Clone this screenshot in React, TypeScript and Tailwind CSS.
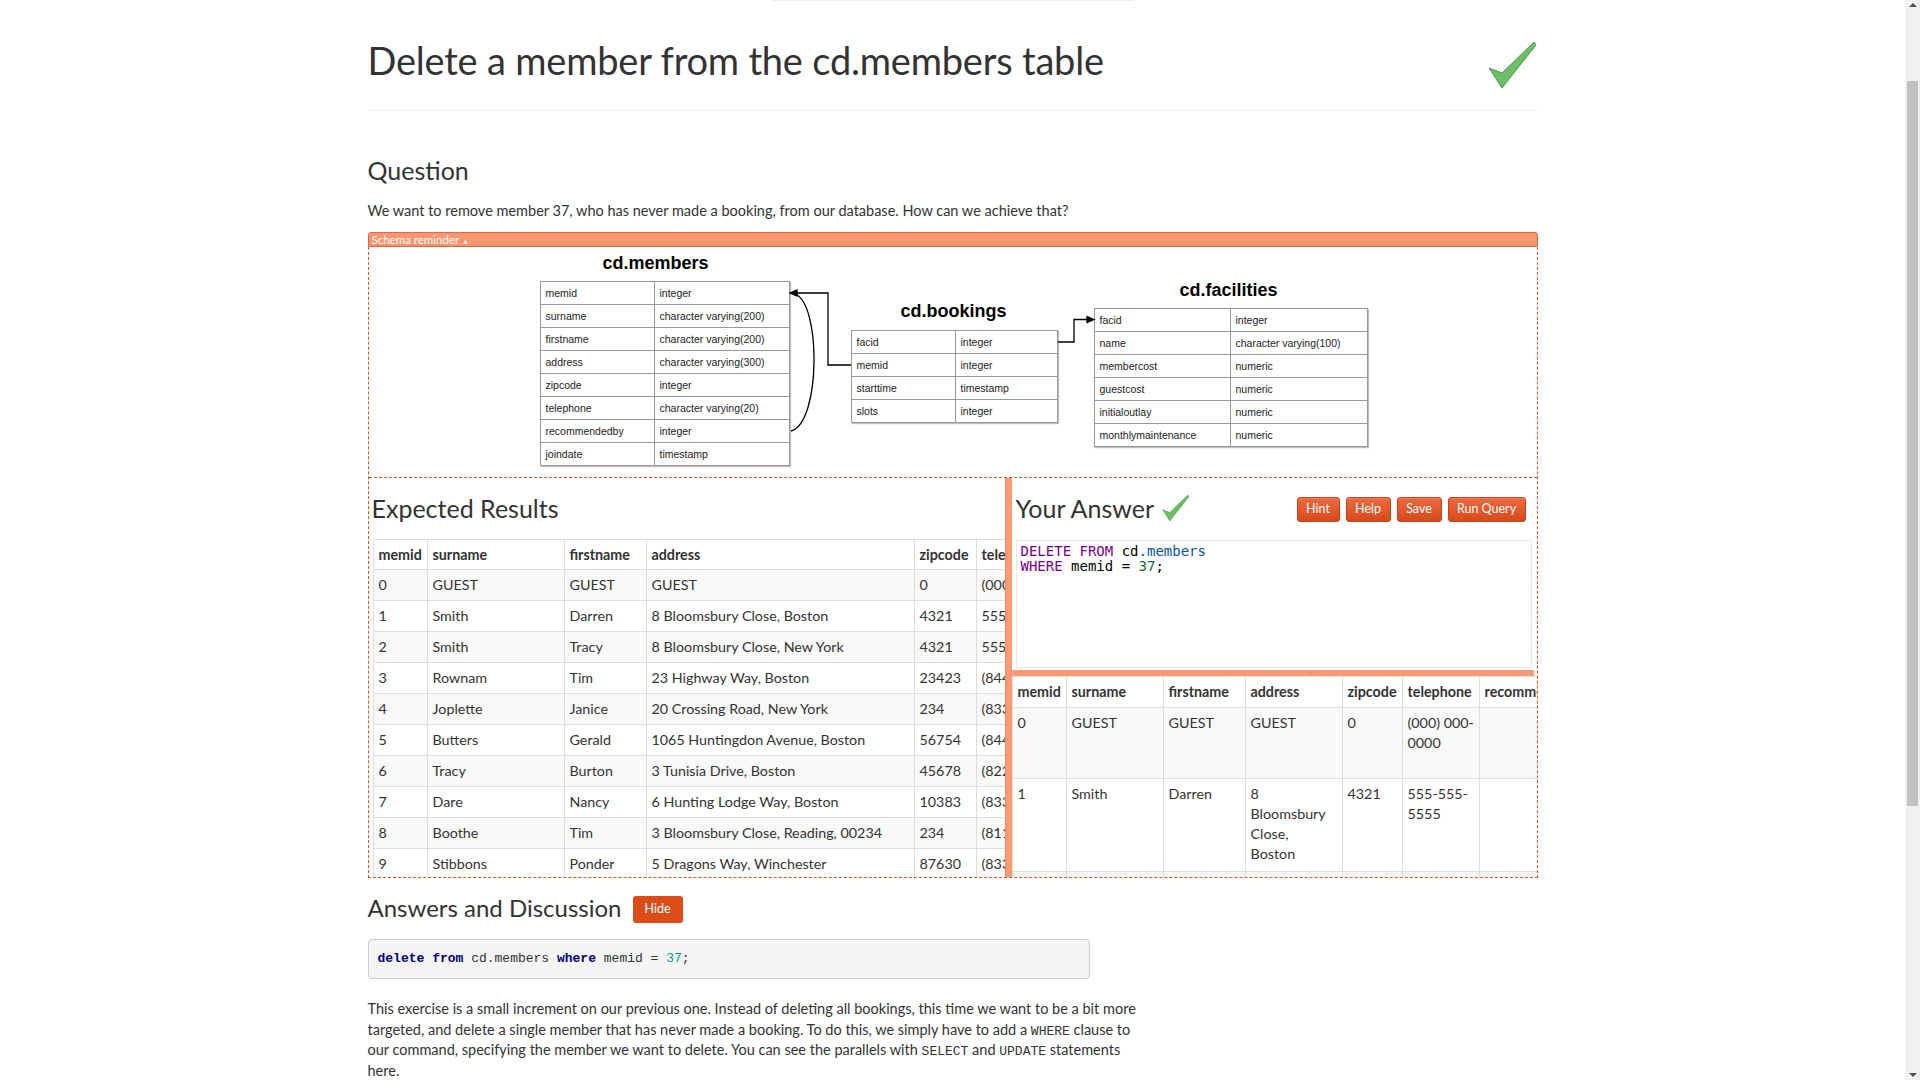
import { useLayoutEffect } from 'react';

const members = [
  ['0', 'GUEST', 'GUEST', 'GUEST', '0', '(000) 000-0000', '', '2012-07-01 00:00:00'],
  ['1', 'Smith', 'Darren', '8 Bloomsbury Close, Boston', '4321', '555-555-5555', '', '2012-07-02 12:02:05'],
  ['2', 'Smith', 'Tracy', '8 Bloomsbury Close, New York', '4321', '555-555-5555', '', '2012-07-02 12:08:23'],
  ['3', 'Rownam', 'Tim', '23 Highway Way, Boston', '23423', '(844) 693-0723', '', '2012-07-03 09:32:15'],
  ['4', 'Joplette', 'Janice', '20 Crossing Road, New York', '234', '(833) 942-4710', '1', '2012-07-03 10:25:05'],
  ['5', 'Butters', 'Gerald', '1065 Huntingdon Avenue, Boston', '56754', '(844) 078-4130', '1', '2012-07-09 10:44:09'],
  ['6', 'Tracy', 'Burton', '3 Tunisia Drive, Boston', '45678', '(822) 354-9973', '', '2012-07-15 08:52:55'],
  ['7', 'Dare', 'Nancy', '6 Hunting Lodge Way, Boston', '10383', '(833) 776-4001', '4', '2012-07-25 08:59:12'],
  ['8', 'Boothe', 'Tim', '3 Bloomsbury Close, Reading, 00234', '234', '(811) 433-2547', '3', '2012-07-25 16:02:35'],
  ['9', 'Stibbons', 'Ponder', '5 Dragons Way, Winchester', '87630', '(833) 160-3900', '6', '2012-07-25 17:09:05'],
];

const headers = ['memid', 'surname', 'firstname', 'address', 'zipcode', 'telephone', 'recommendedby', 'joindate'];

const schema = {
  members: [
    ['memid', 'integer'],
    ['surname', 'character varying(200)'],
    ['firstname', 'character varying(200)'],
    ['address', 'character varying(300)'],
    ['zipcode', 'integer'],
    ['telephone', 'character varying(20)'],
    ['recommendedby', 'integer'],
    ['joindate', 'timestamp'],
  ],
  bookings: [
    ['facid', 'integer'],
    ['memid', 'integer'],
    ['starttime', 'timestamp'],
    ['slots', 'integer'],
  ],
  facilities: [
    ['facid', 'integer'],
    ['name', 'character varying(100)'],
    ['membercost', 'numeric'],
    ['guestcost', 'numeric'],
    ['initialoutlay', 'numeric'],
    ['monthlymaintenance', 'numeric'],
  ],
};

function Tick({ className }: { className: string }) {
  return (
    <svg viewBox="0 0 50 50" className={className}>
      <path
        d="M1 28 L14 33 L46 2 L48 5 L14 48 Z"
        fill="#6cbf66"
        stroke="#4f9a4a"
        strokeWidth="1"
        strokeLinejoin="round"
      />
    </svg>
  );
}

function SchemaTable({ rows, left, top, width, split, title, titleBox }: {
  rows: string[][];
  left: string;
  top: string;
  width: string;
  split: string;
  title: string;
  titleBox: string;
}) {
  return (
    <>
      <div className={`absolute ${titleBox} w-[200px] text-center text-[18px] font-bold text-black leading-[20px]`}>
        {title}
      </div>
      <table className={`absolute ${top} ${left} ${width} table-fixed border-collapse border border-[#666] shadow-[1px_1px_1px_rgba(0,0,0,0.25)]`}>
        <colgroup>
          <col className={split} />
          <col />
        </colgroup>
        <tbody>
          {rows.map(([name, type]) => (
            <tr key={name} className="h-[23px]">
              <td className="border border-[#999] px-[5px] text-[10.5px] text-[#222] leading-[22px]">{name}</td>
              <td className="border border-[#999] px-[5px] text-[10.5px] text-[#222] leading-[22px] whitespace-nowrap">{type}</td>
            </tr>
          ))}
        </tbody>
      </table>
    </>
  );
}

function Diagram() {
  return (
    <div className="relative h-[230px] font-['Liberation_Sans',Arial,sans-serif]">
      <SchemaTable rows={schema.members} title="cd.members" titleBox="left-[187px] top-[6px]" left="left-[171px]" top="top-[34px]" width="w-[250px]" split="w-[114px]" />
      <SchemaTable rows={schema.bookings} title="cd.bookings" titleBox="left-[485px] top-[54px]" left="left-[482px]" top="top-[83px]" width="w-[207px]" split="w-[104px]" />
      <SchemaTable rows={schema.facilities} title="cd.facilities" titleBox="left-[760px] top-[33px]" left="left-[725px]" top="top-[61px]" width="w-[274px]" split="w-[136px]" />
      <svg className="absolute inset-0 w-full h-full pointer-events-none" fill="none" stroke="#000" strokeWidth="1.3">
        <path d="M482 118 H459 V46 H426" />
        <path d="M421 46 L428 43 L428 49 Z" fill="#000" />
        <path d="M422 184 C452 176 452 56 426 47" />
        <path d="M689 95 H705 V72.5 H719" />
        <path d="M725 72.5 L718 69.5 L718 75.5 Z" fill="#000" />
      </svg>
    </div>
  );
}

function OrangeButton({ label, width }: { label: string; width: string }) {
  return (
    <button className={`${width} h-[25px] rounded-[3px] border border-[#c4431a] bg-gradient-to-b from-[#ec6a3e] to-[#d8491a] text-[12.5px] text-white leading-none shadow-[inset_0_1px_0_rgba(255,255,255,0.15)]`}>
      {label}
    </button>
  );
}

function Scrollbar() {
  return (
    <div className="fixed right-0 top-0 w-[15px] h-screen bg-[#f1f1f1]">
      <div className="absolute top-[3px] left-[4px] w-0 h-0 border-x-[4px] border-x-transparent border-b-[4px] border-b-[#505050]" />
      <div className="absolute top-[81px] left-[2px] w-[11px] h-[725px] bg-[#c1c1c1]" />
      <div className="absolute bottom-[3px] left-[4px] w-0 h-0 border-x-[4px] border-x-transparent border-t-[4px] border-t-[#505050]" />
    </div>
  );
}

const mono = "font-['Liberation_Mono',monospace] text-[13px] leading-none";

export default function App() {
  useLayoutEffect(() => {
    window.scrollTo(0, 98);
  }, []);

  const rightRows = [
    { h: 'h-[71px]', bg: 'bg-[#f9f9f9]', cells: ['0', 'GUEST', 'GUEST', 'GUEST', '0', '(000) 000-\n0000', '', '2012-07-01\n00:00:00'] },
    { h: 'h-[93px]', bg: 'bg-white', cells: ['1', 'Smith', 'Darren', '8\nBloomsbury\nClose,\nBoston', '4321', '555-555-\n5555', '', '2012-07-02\n12:02:05'] },
    { h: 'h-[93px]', bg: 'bg-[#f9f9f9]', cells: ['2', 'Smith', 'Tracy', '8\nBloomsbury\nClose, New\nYork', '4321', '555-555-\n5555', '', '2012-07-02\n12:08:23'] },
  ];

  return (
    <div className="min-h-[1580px] w-[1905px] bg-white text-[#333] font-['Lato','Open_Sans',sans-serif]">
      {/* area above the fold */}
      <div className="h-[99px] flex items-end justify-center">
        <div className="w-[367px] h-[40px] border border-[#eee] rounded-b-[4px]" />
      </div>

      <div className="mx-auto w-[1170px]">
        <div className="flex items-start justify-between pt-[37px] pb-[20px] border-b border-[#eee]">
          <h1 className="text-[38px] leading-[44px] font-normal tracking-[-0.2px]">Delete a member from the cd.members table</h1>
          <Tick className="w-[50px] h-[50px] mt-[2px]" />
        </div>

        <h2 className="mt-[43px] text-[25px] leading-[32px]">Question</h2>
        <p className="mt-[15px] text-[14.5px] leading-[20px]">
          We want to remove member 37, who has never made a booking, from our database. How can we achieve that?
        </p>

        <div className="mt-[11px] h-[15px] rounded-t-[3px] border border-[#e06a43] bg-[#fa9671] px-[3px] text-[11.5px] leading-[13px] text-white">
          Schema reminder <span className="text-[7px] align-middle">▲</span>
        </div>

        <div className="border-x border-b border-dashed border-[#d9541e]">
          <Diagram />

          <div className="flex h-[400px] border-t border-dashed border-[#d9541e]">
            {/* expected results */}
            <div className="w-[636px] overflow-hidden pl-[4px]">
              <h3 className="mt-[14px] text-[25px] leading-[32px] -ml-[1px]">Expected Results</h3>
              <table className="mt-[15px] w-[1023px] table-fixed border-collapse border border-[#ddd] text-[14.3px] leading-[20px]">
                <colgroup>
                  <col className="w-[54px]" />
                  <col className="w-[137px]" />
                  <col className="w-[82px]" />
                  <col className="w-[268px]" />
                  <col className="w-[62px]" />
                  <col className="w-[130px]" />
                  <col className="w-[130px]" />
                  <col className="w-[160px]" />
                </colgroup>
                <thead>
                  <tr className="h-[30px]">
                    {headers.map((h) => (
                      <th key={h} className="border border-[#ddd] px-[5px] text-left font-bold whitespace-nowrap overflow-hidden">{h}</th>
                    ))}
                  </tr>
                </thead>
                <tbody>
                  {members.map((row, i) => (
                    <tr key={row[0]} className={`h-[31px] ${i % 2 === 0 ? 'bg-[#f9f9f9]' : 'bg-white'}`}>
                      {row.map((c, j) => (
                        <td key={j} className="border border-[#ddd] px-[5px] whitespace-nowrap overflow-hidden">{c}</td>
                      ))}
                    </tr>
                  ))}
                </tbody>
              </table>
            </div>

            <div className="w-[7px] bg-[#fd9a76] border-l border-[#f38a63]" />

            {/* your answer */}
            <div className="flex-1 flex flex-col overflow-hidden">
              <div className="pl-[4px] pr-[5px]">
                <div className="mt-[14px] flex items-center justify-between">
                  <div className="flex items-center gap-[8px]">
                    <h3 className="text-[25px] leading-[32px]">Your Answer</h3>
                    <Tick className="w-[28px] h-[28px]" />
                  </div>
                  <div className="flex gap-[6px] mr-[6px] mt-[2px]">
                    <OrangeButton label="Hint" width="w-[43px]" />
                    <OrangeButton label="Help" width="w-[45px]" />
                    <OrangeButton label="Save" width="w-[45px]" />
                    <OrangeButton label="Run Query" width="w-[78px]" />
                  </div>
                </div>
                <div className="mt-[16px] h-[128px] border border-[#e8e8e8] px-[4px] pt-[3px] font-['DejaVu_Sans_Mono',monospace] text-[14px] leading-[14.5px] text-black">
                  <div>
                    <span className="text-[#708]">DELETE</span> <span className="text-[#708]">FROM</span> cd<span className="text-[#05a]">.members</span>
                  </div>
                  <div>
                    <span className="text-[#708]">WHERE</span> memid = <span className="text-[#164]">37</span>;
                  </div>
                </div>
              </div>
              <div className="mt-[2px] mr-[3px] h-[8px] bg-[#fd9a76] flex items-center justify-center gap-[72px]">
                <span className="text-[6px] leading-none text-[#c96a49] tracking-[1px]">···</span>
                <span className="text-[6px] leading-none text-[#c96a49] tracking-[1px]">···</span>
              </div>
              <div className="overflow-hidden">
                <table className="w-[687px] table-fixed border-collapse border border-[#ddd] text-[14.3px] leading-[20px]">
                  <colgroup>
                    <col className="w-[54px]" />
                    <col className="w-[97px]" />
                    <col className="w-[82px]" />
                    <col className="w-[97px]" />
                    <col className="w-[60px]" />
                    <col className="w-[77px]" />
                    <col className="w-[120px]" />
                    <col className="w-[100px]" />
                  </colgroup>
                  <thead>
                    <tr className="h-[31px]">
                      {headers.map((h) => (
                        <th key={h} className="border border-[#ddd] px-[5px] text-left font-bold whitespace-nowrap overflow-hidden">{h}</th>
                      ))}
                    </tr>
                  </thead>
                  <tbody>
                    {rightRows.map((r, i) => (
                      <tr key={i} className={`${r.h} ${r.bg}`}>
                        {r.cells.map((c, j) => (
                          <td key={j} className="border border-[#ddd] px-[5px] pt-[5px] align-top whitespace-pre overflow-hidden">{c}</td>
                        ))}
                      </tr>
                    ))}
                  </tbody>
                </table>
              </div>
            </div>
          </div>
        </div>

        <div className="mt-[14px] flex items-center gap-[11px]">
          <h2 className="text-[24px] leading-[32px]">Answers and Discussion</h2>
          <button className="h-[27px] px-[12px] rounded-[3px] bg-[#dc4c18] text-[12.5px] text-white mt-[3px]">Hide</button>
        </div>

        <pre className="mt-[15px] w-[722px] h-[40px] rounded-[4px] border border-[#ccc] bg-[#f5f5f5] px-[9px] font-['Liberation_Mono',monospace] text-[13px] leading-[38px] text-[#333]">
          <span className="font-bold text-[#000080]">delete</span> <span className="font-bold text-[#000080]">from</span> cd.members <span className="font-bold text-[#000080]">where</span> memid = <span className="text-[#099]">37</span>;
        </pre>

        <p className="mt-[20px] w-[780px] text-[14.5px] leading-[20.5px]">
          This exercise is a small increment on our previous one. Instead of deleting all bookings, this time we want to be a bit more targeted, and delete a single member that has never made a booking. To do this, we simply have to add a <span className={mono}>WHERE</span> clause to our command, specifying the member we want to delete. You can see the parallels with <span className={mono}>SELECT</span> and <span className={mono}>UPDATE</span> statements here.
        </p>
      </div>
      <Scrollbar />
    </div>
  );
}
